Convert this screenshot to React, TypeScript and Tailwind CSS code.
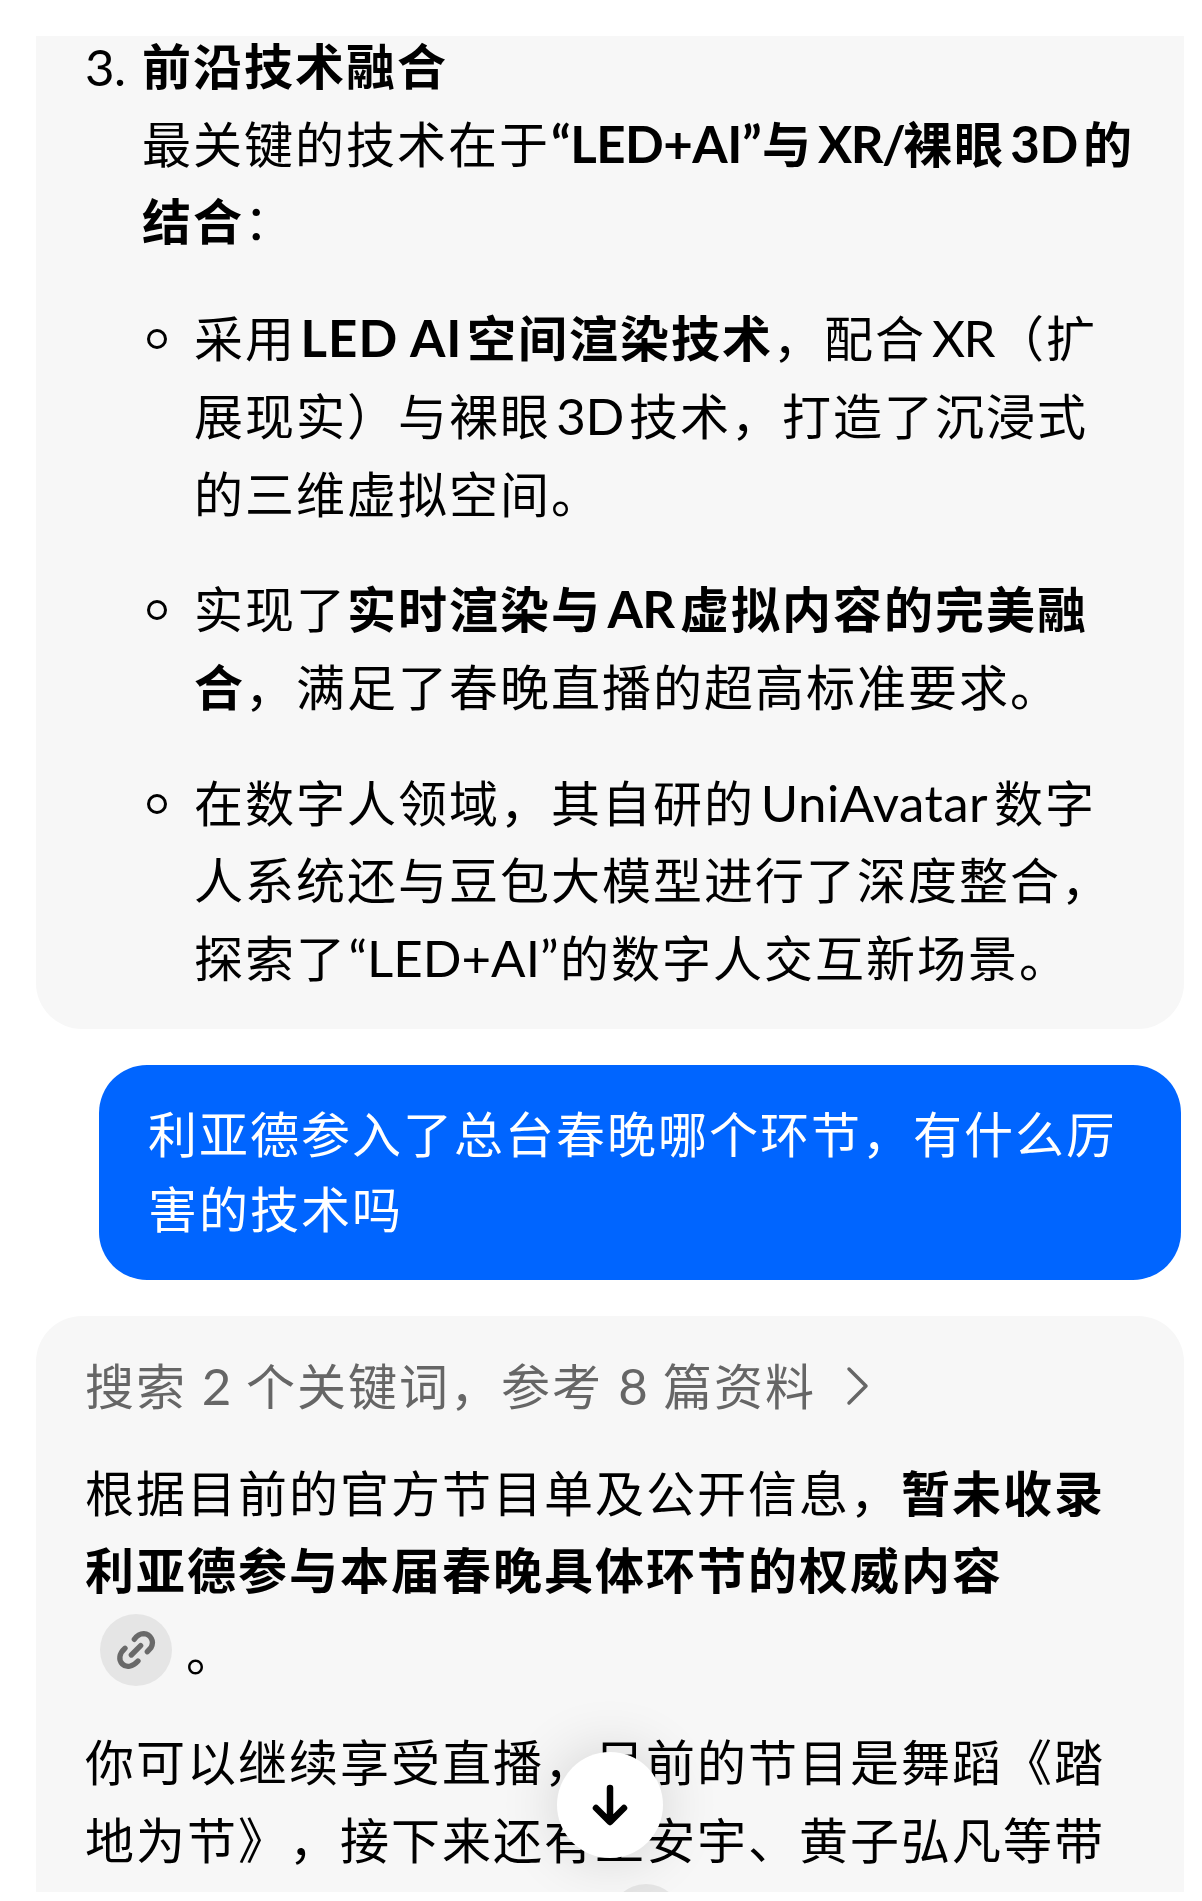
import type { ReactNode } from 'react'

// Latin run set inside Chinese text
function Latin({ className, children }: { className: string; children: ReactNode }) {
  return (
    <span className={`inline-block text-center whitespace-nowrap font-[Lato,'Noto_Sans_CJK_SC',sans-serif] text-[51px] leading-none ${className}`}>
      {children}
    </span>
  )
}

function Bullet({ children }: { children: ReactNode }) {
  return (
    <li className="flex">
      <span className="mt-[32px] ml-[5px] mr-[27px] h-5 w-5 shrink-0 rounded-full border-[3px] border-black"></span>
      <div>{children}</div>
    </li>
  )
}

function LinkBadge() {
  return (
    <span className="flex h-[72px] w-[72px] items-center justify-center rounded-full bg-[#e5e5e5]">
      <svg width="40" height="40" viewBox="107 91 120 120" fill="none" stroke="#696969" strokeWidth="16" strokeLinecap="round" strokeLinejoin="round">
        <path d="M162 119 C171 106 181 102 190 102 C211 104 223 124 212 144 L201 156" />
        <path d="M134 146 C116 162 114 181 126 193 C138 205 157 202 173 184" />
        <path d="M153 166 L181 138" />
      </svg>
    </span>
  )
}

export default function App() {
  return (
    <div className="relative flex h-[1901px] w-[1202px] flex-col overflow-hidden bg-white pl-9 pt-9 font-['Noto_Sans_CJK_SC',sans-serif] text-[49px] leading-[77.7px] tracking-[2px] text-black whitespace-nowrap [text-spacing-trim:space-all]">
      {/* Previous answer */}
      <section className="flex h-[993px] w-[1148px] shrink-0 rounded-b-[46px] bg-[#f7f7f7] pl-[49px]">
        <div className="w-[57px] shrink-0 -mt-2 font-[Lato,sans-serif] text-[51px] tracking-[-0.5px]">3.</div>
        <div className="-mt-[11px]">
          <h2 className="font-bold">前沿技术融合</h2>
          <p>
            最关键的技术在于<b><Latin className="w-[212px] tracking-[-0.5px]">“LED+AI”</Latin>与<Latin className="w-[90px] pl-[5px] tracking-[-1.5px]">XR/</Latin>裸眼<Latin className="w-[78px] tracking-[-0.5px]">3D</Latin>的</b>
            <br />
            <b>结合</b>：
          </p>
          <ul className="mt-[39px] flex flex-col gap-[38px]">
            <Bullet>
              采用<b><Latin className="w-[171px] tracking-[1px]">LED AI</Latin>空间渲染技术</b>，配合<Latin className="w-[69px] pl-[5px] tracking-[-1.5px]">XR</Latin>（扩
              <br />
              展现实）与裸眼<Latin className="w-[78px] tracking-[-0.5px]">3D</Latin>技术，打造了沉浸式
              <br />
              的三维虚拟空间。
            </Bullet>
            <Bullet>
              实现了<b>实时渲染与<Latin className="w-[78px] tracking-[-0.5px]">AR</Latin>虚拟内容的完美融</b>
              <br />
              <b>合</b>，满足了春晚直播的超高标准要求。
            </Bullet>
            <Bullet>
              在数字人领域，其自研的<Latin className="w-[239px] tracking-[0.5px]">UniAvatar</Latin>数字
              <br />
              人系统还与豆包大模型进行了深度整合，
              <br />
              探索了<Latin className="w-[213px] tracking-normal">“LED+AI”</Latin>的数字人交互新场景。
            </Bullet>
          </ul>
        </div>
      </section>

      {/* User question */}
      <section className="mt-9 ml-[63px] h-[215px] w-[1082px] shrink-0 rounded-[48px] bg-[#0065ff] pl-[49px] pt-[30px] leading-[74.5px] text-white">
        利亚德参入了总台春晚哪个环节，有什么厉
        <br />
        害的技术吗
      </section>

      {/* Current answer */}
      <section className="relative mt-9 h-[576px] w-[1148px] shrink-0 overflow-hidden rounded-t-[46px] bg-[#f7f7f7] pl-[49px] pt-[29px]">
        <div className="flex items-center text-[#666]">
          <span>
            搜索<Latin className="w-[59px] tracking-normal">2</Latin>个关键词，参考<Latin className="w-[60px] tracking-normal">8</Latin>篇资料
          </span>
          <svg className="mt-1 ml-[30px]" width="24" height="40" viewBox="0 0 24 40" fill="none" stroke="#666" strokeWidth="3.5" strokeLinecap="round" strokeLinejoin="round">
            <path d="M3 3 L20 20 L3 37" />
          </svg>
        </div>
        <p className="mt-[29px]">
          根据目前的官方节目单及公开信息，<b>暂未收录</b>
          <br />
          <b>利亚德参与本届春晚具体环节的权威内容</b>
        </p>
        <div className="flex h-[78px] items-center pl-[15px] pt-[7px]">
          <LinkBadge />
          <span className="ml-[14px]">。</span>
        </div>
        <p className="mt-9">
          你可以继续享受直播，目前的节目是舞蹈《踏
          <br />
          地为节》，接下来还有王安宇、黄子弘凡等带
        </p>
        <div className="ml-[525px] mt-[7px]">
          <LinkBadge />
        </div>

        {/* Scroll to bottom */}
        <button className="absolute left-[521px] top-[436px] flex h-[106px] w-[106px] items-center justify-center rounded-full bg-white shadow-[0_0_60px_rgba(0,0,0,0.16)]">
          <svg width="42" height="46" viewBox="0 0 42 46" fill="none" stroke="black" strokeWidth="6.5" strokeLinecap="round" strokeLinejoin="round">
            <path d="M21 6 V39 M7 26 L21 40 L35 26" />
          </svg>
        </button>
      </section>
    </div>
  )
}
